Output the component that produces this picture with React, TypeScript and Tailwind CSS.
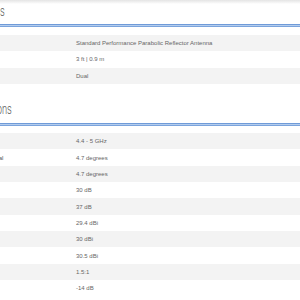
import React from 'react';

type Row = { label: string; value: string };

const physical: Row[] = [
  { label: 'Antenna Type', value: 'Standard Performance Parabolic Reflector Antenna' },
  { label: 'Dimensions', value: '3 ft | 0.9 m' },
  { label: 'Polarization', value: 'Dual' },
];

const antenna: Row[] = [
  { label: 'Frequency Range', value: '4.4 - 5 GHz' },
  { label: 'Beamwidth Horizontal', value: '4.7 degrees' },
  { label: 'Beamwidth Vertical', value: '4.7 degrees' },
  { label: 'Front-to-Back Ratio', value: '30 dB' },
  { label: 'Cross-pol Isolation', value: '37 dB' },
  { label: 'Gain (4.4 GHz)', value: '29.4 dBi' },
  { label: 'Gain (4.7 GHz)', value: '30 dBi' },
  { label: 'Gain (5 GHz)', value: '30.5 dBi' },
  { label: 'Max. VSWR', value: '1.5:1' },
  { label: 'Return Loss', value: '-14 dB' },
];

const SectionTitle: React.FC<{ title: string; edge: string }> = ({ title, edge }) => (
  <div className="flex h-[15px]">
    <div className={`flex justify-end ${edge}`}>
      <span className="shrink-0 whitespace-nowrap origin-right scale-x-[0.62] font-['Roboto',sans-serif] font-light text-[15px] leading-[15px] text-[#5a5a5a]">
        {title}
      </span>
    </div>
  </div>
);

const BlueRule = () => (
  <div className="flex flex-col">
    <div className="h-px bg-[#6f9bd8]" />
    <div className="h-px bg-[#b4cdee]" />
    <div className="h-px bg-[#7ba4dc]" />
  </div>
);

const SpecRows: React.FC<{ rows: Row[] }> = ({ rows }) => (
  <div className="ml-[-55px]">
    {rows.map((r, i) => (
      <div
        key={r.label}
        className={`flex h-[16.33px] items-center text-[6px] leading-none ${i % 2 === 0 ? 'bg-[#f3f3f3]' : 'bg-white'}`}
      >
        <div className="w-[131px] shrink-0 whitespace-nowrap text-[#555]">{r.label}</div>
        <div className="whitespace-nowrap text-[#666]">{r.value}</div>
      </div>
    ))}
  </div>
);

export default function App() {
  return (
    <div className="w-[300px] h-[300px] overflow-hidden bg-white font-['Liberation_Sans',Arial,sans-serif]">
      <div className="h-[4px] bg-gradient-to-b from-[#e4e4e4] to-white" />

      <SectionTitle title="Physical Specifications" edge="w-[5px]" />
      <div className="mt-[5.2px]">
        <BlueRule />
      </div>
      <div className="mt-[7.7px]">
        <SpecRows rows={physical} />
      </div>

      <div className="mt-[17.7px]">
        <SectionTitle title="Antenna Specifications" edge="w-[12px]" />
      </div>
      <div className="mt-[6px]">
        <BlueRule />
      </div>
      <div className="mt-[7.6px]">
        <SpecRows rows={antenna} />
      </div>
    </div>
  );
}
